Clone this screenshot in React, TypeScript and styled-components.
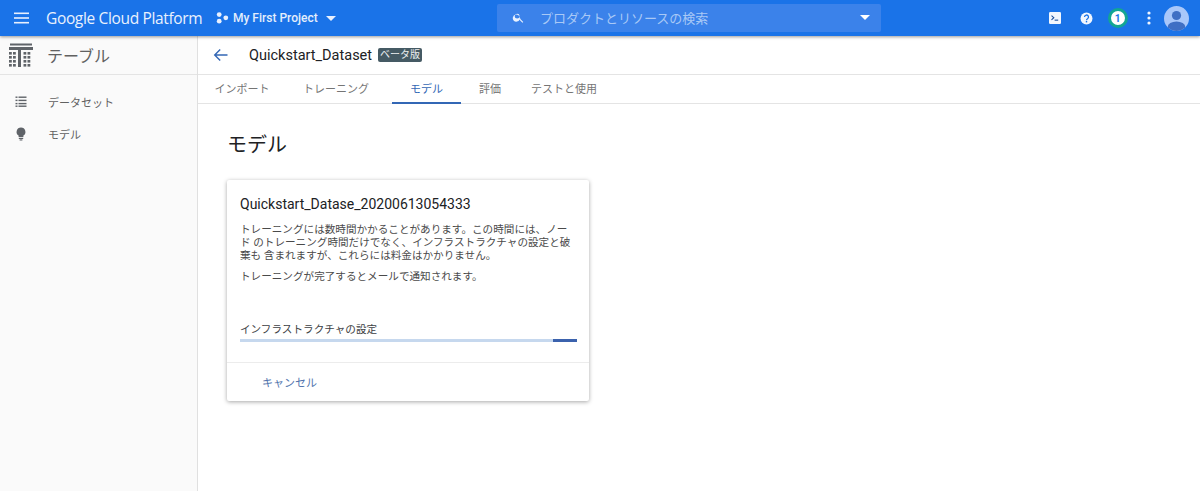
import React from 'react';
import styled, { createGlobalStyle } from 'styled-components';

const JP = `Roboto, "Noto Sans CJK JP", sans-serif`;

const GlobalStyle = createGlobalStyle`
  html, body {
    margin: 0;
    padding: 0;
    background: #fff;
    font-family: ${JP};
    overflow: hidden;
  }
`;

const Page = styled.div`
  width: 1200px;
  height: 491px;
  display: flex;
  flex-direction: column;
  overflow: hidden;
`;

// Top blue bar
const TopBar = styled.header`
  height: 36px;
  flex: none;
  background: #1a73e8;
  box-shadow: 0 1px 3px rgba(0, 0, 0, 0.4);
  display: flex;
  align-items: center;
  position: relative;
  z-index: 10;
  color: #fff;
`;

const MenuButton = styled.div`
  width: 46px;
  padding-left: 14px;
  box-sizing: border-box;
  display: flex;
  align-items: center;
`;

const Brand = styled.div`
  font-family: "Open Sans", Roboto, sans-serif;
  font-size: 15.5px;
  width: 170px;
  letter-spacing: -0.35px;
  white-space: nowrap;
  color: #e9f1fd;
`;

const ProjectPicker = styled.div`
  width: 281px;
  display: flex;
  align-items: center;
  gap: 4px;
  font-size: 12px;
  font-weight: 500;
  color: #e3eefc;
`;

const SearchBox = styled.div`
  width: 384px;
  height: 28px;
  margin-top: -1px;
  background: #3b82ea;
  border-radius: 2px;
  display: flex;
  align-items: center;
  padding: 0 11px 0 15px;
  box-sizing: border-box;
  font-size: 13px;
  color: #a9c9f6;
`;

const SearchText = styled.span`
  margin-left: 15px;
  flex: 1;
`;

const TopActions = styled.div`
  margin-left: auto;
  display: flex;
  align-items: center;
  padding-right: 11px;
`;

const ActionSlot = styled.div<{ $w: number }>`
  width: ${p => p.$w}px;
  display: flex;
  justify-content: center;
  align-items: center;
`;

const Badge = styled.div`
  width: 14px;
  height: 14px;
  border-radius: 50%;
  background: #fff;
  border: 3px solid #12a594;
  color: #1a73e8;
  font-size: 10px;
  font-weight: 700;
  display: flex;
  align-items: center;
  justify-content: center;
`;

const Body = styled.div`
  flex: 1;
  display: flex;
  min-height: 0;
`;

// Left navigation
const Sidebar = styled.aside`
  width: 197px;
  flex: none;
  background: #fafafa;
  border-right: 1px solid #e0e0e0;
`;

const SideHead = styled.div`
  height: 38px;
  display: flex;
  align-items: center;
  gap: 14px;
  padding-left: 9px;
  border-bottom: 1px solid #e4e4e4;
  font-size: 16px;
  color: #616161;
`;

const SideList = styled.div`
  padding-top: 11px;
  display: flex;
  flex-direction: column;
`;

const SideItem = styled.div`
  height: 32px;
  display: flex;
  align-items: center;
  gap: 21px;
  padding-left: 15px;
  font-size: 11px;
  color: #616161;
`;

const Main = styled.main`
  flex: 1;
  min-width: 0;
`;

const TitleRow = styled.div`
  height: 38px;
  display: flex;
  align-items: center;
  padding-left: 15px;
  border-bottom: 1px solid #e4e4e4;
`;

const TitleText = styled.div`
  margin-left: 20px;
  font-size: 14.5px;
  color: #202124;
`;

const BetaTag = styled.span`
  margin-left: 6px;
  background: #455a64;
  color: #eceff1;
  font-size: 10px;
  line-height: 14px;
  padding: 0 2px;
  border-radius: 2px;
`;

const Tabs = styled.nav`
  height: 28px;
  display: flex;
  border-bottom: 1px solid #e4e4e4;
  padding-left: 6px;
`;

const Tab = styled.div<{ $active?: boolean; $w: number }>`
  width: ${p => p.$w}px;
  box-sizing: border-box;
  display: flex;
  align-items: center;
  justify-content: center;
  font-size: 11px;
  padding-bottom: 1px;
  color: ${p => (p.$active ? '#3367b5' : '#757575')};
  border-bottom: 2px solid ${p => (p.$active ? '#3367b5' : 'transparent')};
  height: 29px;
`;

const Content = styled.div`
  padding: 28px 0 0 29px;
`;

const Heading = styled.h1`
  margin: 0 0 22px;
  font-size: 20px;
  line-height: 26px;
  font-weight: 400;
  color: #202124;
`;

const Card = styled.section`
  width: 362px;
  height: 221px;
  background: #fff;
  border-radius: 2px;
  box-shadow: 0 1px 4px rgba(0, 0, 0, 0.35);
  display: flex;
  flex-direction: column;
`;

const CardBody = styled.div`
  flex: 1;
  padding: 15px 12px 0 13px;
`;

const CardTitle = styled.h2`
  margin: 0 0 10px;
  font-size: 14px;
  line-height: 18px;
  font-weight: 400;
  color: #202124;
`;

const Para = styled.p`
  margin: 0 0 8px;
  font-size: 10.6px;
  line-height: 13px;
  color: #4a4a4a;
`;

const ProgressLabel = styled.div`
  margin-top: 40px;
  font-size: 10.6px;
  line-height: 14px;
  color: #3c4043;
`;

const ProgressTrack = styled.div`
  margin-top: 2px;
  height: 3px;
  background: #c6d8ee;
  position: relative;
`;

const ProgressBar = styled.div`
  position: absolute;
  top: 0;
  right: 0;
  bottom: 0;
  width: 24px;
  background: #3b62ad;
`;

const CardFooter = styled.div`
  height: 38px;
  flex: none;
  border-top: 1px solid #ececec;
  display: flex;
  align-items: center;
  padding-left: 35px;
  font-size: 11px;
  color: #5174ad;
`;

const Caret = ({ color = '#fff' }: { color?: string }) => (
  <svg width="10" height="5" viewBox="0 0 10 5"><path d="M0 0h10L5 5z" fill={color} /></svg>
);

const App: React.FC = () => (
  <Page>
    <GlobalStyle />
    <TopBar>
      <MenuButton>
        <svg width="15" height="12" viewBox="0 0 15 12" fill="#e8f0fe">
          <rect width="15" height="1.6" y="0.5" />
          <rect width="15" height="1.6" y="5.2" />
          <rect width="15" height="1.6" y="9.9" />
        </svg>
      </MenuButton>
      <Brand>Google Cloud Platform</Brand>
      <ProjectPicker>
        <svg width="13" height="12" viewBox="0 0 13 12" fill="#e8f0fe">
          <circle cx="3.2" cy="2.6" r="2.4" />
          <circle cx="3.2" cy="9.2" r="2.4" />
          <circle cx="9.8" cy="5.8" r="2.4" />
        </svg>
        <span>My First Project</span>
        <span style={{ marginLeft: 4, display: 'flex' }}><Caret color="#e8f0fe" /></span>
      </ProjectPicker>
      <SearchBox>
        <svg width="13" height="13" viewBox="0 0 24 24" fill="#eaf2fe">
          <path d="M15.5 14h-.8l-.3-.3A6.5 6.5 0 1 0 14 15.5l.3.3v.8l5 5 1.5-1.5-5-5zm-6 0a4.5 4.5 0 1 1 0-9 4.5 4.5 0 0 1 0 9z" />
        </svg>
        <SearchText>プロダクトとリソースの検索</SearchText>
        <Caret />
      </SearchBox>
      <TopActions>
        <ActionSlot $w={32}>
          <svg width="12" height="12" viewBox="0 0 12 12">
            <rect width="12" height="12" rx="1.2" fill="#f1f6fe" />
            <path d="M2.5 3.6 4.8 5.7 2.5 7.8" stroke="#1a4f9c" strokeWidth="1.1" fill="none" />
            <rect x="5.6" y="7.6" width="3.6" height="1.1" fill="#1a4f9c" />
          </svg>
        </ActionSlot>
        <ActionSlot $w={31}>
          <svg width="13" height="13" viewBox="0 0 24 24">
            <circle cx="12" cy="12" r="11" fill="#f1f6fe" />
            <path d="M8.3 9.3a3.7 3.7 0 1 1 5.6 3.1c-1.2.8-1.9 1.4-1.9 2.8" stroke="#1a73e8" strokeWidth="2.4" fill="none" />
            <rect x="10.7" y="16.6" width="2.6" height="2.6" fill="#1a73e8" />
          </svg>
        </ActionSlot>
        <ActionSlot $w={31}><Badge>1</Badge></ActionSlot>
        <ActionSlot $w={31}>
          <svg width="4" height="14" viewBox="0 0 4 14" fill="#f1f6fe">
            <circle cx="2" cy="2" r="1.6" />
            <circle cx="2" cy="7" r="1.6" />
            <circle cx="2" cy="12" r="1.6" />
          </svg>
        </ActionSlot>
        <ActionSlot $w={25}>
          <svg width="25" height="25" viewBox="0 0 25 25">
            <defs>
              <clipPath id="avatar"><circle cx="12.5" cy="12.5" r="12.5" /></clipPath>
            </defs>
            <g clipPath="url(#avatar)">
              <rect width="25" height="25" fill="#a8c7fa" />
              <circle cx="12.5" cy="9.5" r="4.6" fill="#3f6fc4" />
              <ellipse cx="12.5" cy="21" rx="8.8" ry="5.6" fill="#3f6fc4" />
            </g>
          </svg>
        </ActionSlot>
      </TopActions>
    </TopBar>
    <Body>
      <Sidebar>
        <SideHead>
          <svg width="24" height="24" viewBox="0 0 24 24" fill="#5f6368">
            <rect x="1" y="0.5" width="22" height="2" />
            <rect x="0" y="4" width="24" height="3" />
            <rect x="9" y="7" width="3" height="17" />
            {[0, 4, 14.5, 18.5].flatMap(x =>
              [9, 13, 17, 21].map(y => <rect key={`${x}-${y}`} x={x} y={y} width="2.8" height="2.6" />)
            )}
          </svg>
          <span>テーブル</span>
        </SideHead>
        <SideList>
          <SideItem>
            <svg width="12" height="12" viewBox="0 0 12 12" fill="#5f6368">
              {[1, 4.2, 7.4, 10].map(y => (
                <React.Fragment key={y}>
                  <rect x="0.5" y={y - 0.5} width="2" height="1.4" />
                  <rect x="3.5" y={y - 0.5} width="8" height="1.4" />
                </React.Fragment>
              ))}
            </svg>
            <span>データセット</span>
          </SideItem>
          <SideItem>
            <svg width="12" height="14" viewBox="0 0 12 14" fill="#5f6368">
              <path d="M6 .5a4.4 4.4 0 0 0-2.4 8.1V10h4.8V8.6A4.4 4.4 0 0 0 6 .5z" />
              <rect x="3.8" y="10.8" width="4.4" height="1.2" />
              <rect x="4.6" y="12.4" width="2.8" height="1.1" />
            </svg>
            <span>モデル</span>
          </SideItem>
        </SideList>
      </Sidebar>
      <Main>
        <TitleRow>
          <svg width="16" height="14" viewBox="0 0 16 14" fill="none" stroke="#3367b5" strokeWidth="1.4">
            <path d="M14.5 7H2M7.2 1.5 1.7 7l5.5 5.5" />
          </svg>
          <TitleText>Quickstart_Dataset</TitleText>
          <BetaTag>ベータ版</BetaTag>
        </TitleRow>
        <Tabs>
          <Tab $w={76}>インポート</Tab>
          <Tab $w={112}>トレーニング</Tab>
          <Tab $w={69} $active>モデル</Tab>
          <Tab $w={58}>評価</Tab>
          <Tab $w={90}>テストと使用</Tab>
        </Tabs>
        <Content>
          <Heading>モデル</Heading>
          <Card>
            <CardBody>
              <CardTitle>Quickstart_Datase_20200613054333</CardTitle>
              <Para>
                トレーニングには数時間かかることがあります。この時間には、ノード
                のトレーニング時間だけでなく、インフラストラクチャの設定と破棄も
                含まれますが、これらには料金はかかりません。
              </Para>
              <Para>トレーニングが完了するとメールで通知されます。</Para>
              <ProgressLabel>インフラストラクチャの設定</ProgressLabel>
              <ProgressTrack><ProgressBar /></ProgressTrack>
            </CardBody>
            <CardFooter>キャンセル</CardFooter>
          </Card>
        </Content>
      </Main>
    </Body>
  </Page>
);

export default App;
